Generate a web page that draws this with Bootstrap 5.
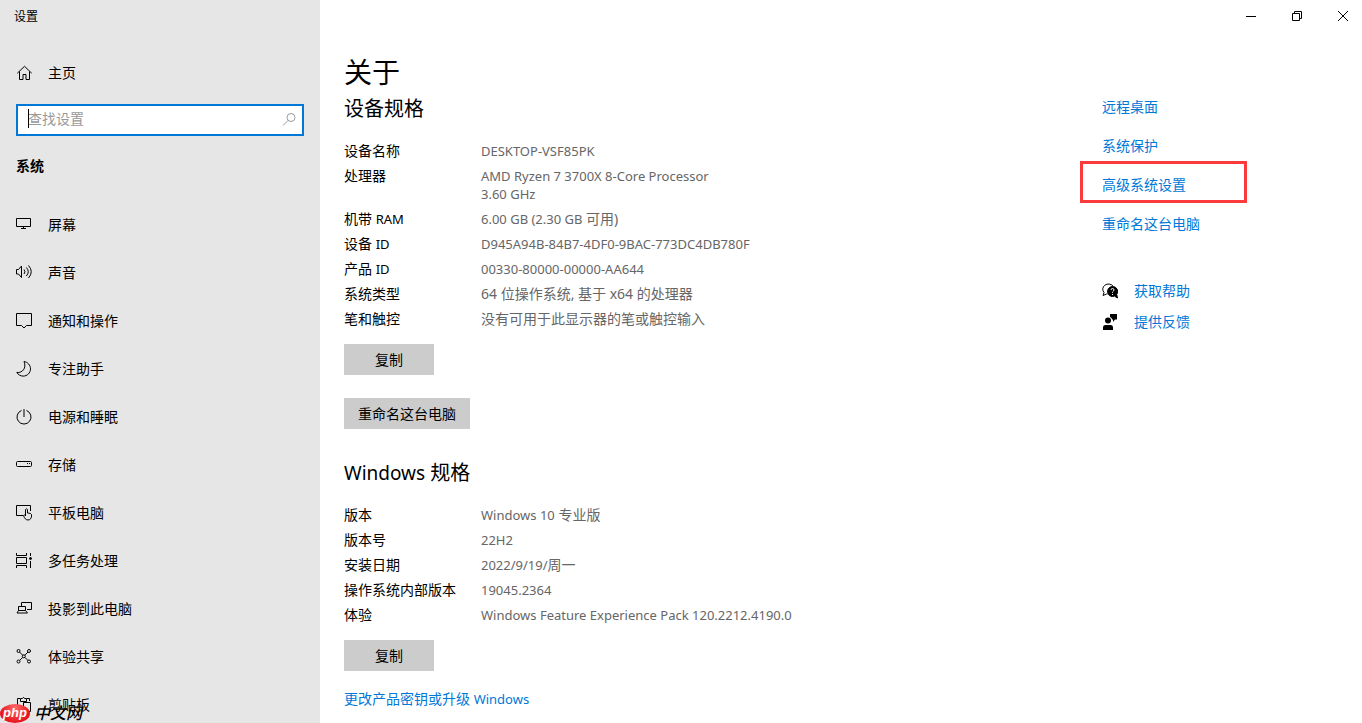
<!DOCTYPE html>
<html lang="zh-CN">
<head>
<meta charset="utf-8">
<meta name="viewport" content="width=device-width, initial-scale=1">
<title>设置</title>
<link href="https://cdn.jsdelivr.net/npm/bootstrap@5.3.0/dist/css/bootstrap.min.css" rel="stylesheet">
<style>
  body { font-family: "Noto Sans", "Noto Sans CJK SC", sans-serif; font-size: 14px; line-height: 18px; color: #000; background: #fff; }
  a { color: #0078d7; text-decoration: none; }
  svg { display: block; fill: none; stroke: #000; }
  .side-pane { width: 320px; background: #e6e6e6; }
  .pane-title { font-size: 12px; line-height: 34px; padding-left: 14px; }
  .side-link { height: 48px; padding: 0 16px; gap: 16px; color: #000; line-height: 20px; }
  .home-link { margin-top: 15px; }
  .search-field { margin: 7px 16px 0; }
  .search-field input { height: 32px; border: 2px solid #0078d7; border-radius: 0; padding: 0 32px 3px 10px; font-size: 14px; line-height: 20px; background: #fff; color: #000; box-shadow: none; }
  .search-field input::placeholder { color: #999; }
  .caret-line { left: 12px; top: 5px; width: 1px; height: 19px; background: #000; }
  .search-icon { right: 7px; top: 8px; }
  .search-icon svg { stroke: #999; }
  .group-title { font-size: 14px; line-height: 20px; font-weight: 700; margin: 20px 16px 25px; }
  .window-bar { height: 32px; margin-right: -4px; }
  .window-bar button { width: 46px; border: 0; background: none; padding: 0; }
  .about-area { padding: 22px 0 0 24px; }
  .page-title { font-size: 28px; line-height: 36px; font-weight: 400; margin: 0 0 5px; }
  .section-title { font-size: 20px; line-height: 28px; font-weight: 400; margin: 0 0 15px; }
  .section-title .latin { font-size: 19px; }
  .spec-table { margin-bottom: 13px; }
  .spec-table th { width: 137px; font-weight: 400; padding: 4px 0 3px; vertical-align: top; }
  .spec-table td { color: #666; padding: 4px 0 3px; }
  .latin { font-size: 13px; }
  .flat-btn { background: #ccc; border-radius: 0; border: 0; color: #000; font-size: 14px; line-height: 19px; padding: 6px 14px; min-width: 90px; }
  .rename-btn { margin: 23px 0 30px; }
  .upgrade-link { margin: 19px 0 0; }
  .related { width: 260px; padding-top: 55px; }
  .related li { line-height: 39px; }
  .marked::after { content: ""; position: absolute; left: -22px; top: -4px; width: 167px; height: 42px; border: 3px solid #fb3a3b; pointer-events: none; }
  .help-links { margin-top: 32px; }
  .help-links a { gap: 16px; line-height: 31px; }
  .site-tag { left: 0; bottom: 0; }
  .site-tag .oval { width: 30px; height: 19px; border-radius: 50%; background: radial-gradient(ellipse at 50% 20%, #ff6a6a, #e8141c 70%); color: #fff; font: italic 700 13px/17px "Liberation Sans", sans-serif; text-align: center; }
  .site-tag .word { font-size: 16px; line-height: 20px; font-style: italic; font-weight: 500; }
</style>
</head>
<body>
<div class="d-flex vh-100 overflow-hidden">
  <aside class="side-pane flex-shrink-0 overflow-hidden position-relative">
    <div class="pane-title">设置</div>
    <a class="side-link home-link d-flex align-items-center" href="#">
      <svg width="16" height="16" viewBox="0 0 16 16"><path d="M1.300 8.200 8.500 1.300l7.200 6.900M3.500 6.500v8h3.500v-5h3v5h3.500v-8"/></svg>
      主页
    </a>
    <div class="search-field position-relative">
      <input class="form-control" type="text" id="find" placeholder="查找设置" aria-label="查找设置">
      <span class="caret-line position-absolute"></span>
      <span class="search-icon position-absolute"><svg width="16" height="16" viewBox="0 0 16 16"><circle cx="10" cy="5.500" r="4"/><path d="m7 8.500-5 5"/></svg></span>
    </div>
    <h2 class="group-title">系统</h2>
    <nav>
      <a class="side-link d-flex align-items-center" href="#"><svg width="16" height="16" viewBox="0 0 16 16"><path d="M.5 1.500h14v8H.5zM7.500 9.500v2M5 11.500h5"/></svg>屏幕</a>
      <a class="side-link d-flex align-items-center" href="#"><svg width="16" height="16" viewBox="0 0 16 16"><path d="M.5 4.500h2l3-3.500v11.500l-3-3.500h-2zM8 4.500q2 2.300 0 4.500M10.300 2.500q4 4.200 0 8.500M12.500.5q5.500 6.200 0 12.500"/></svg>声音</a>
      <a class="side-link d-flex align-items-center" href="#"><svg width="16" height="16" viewBox="0 0 16 16"><path d="M.5.5h15v12h-5L8 15l-2.500-2.500h-5z"/></svg>通知和操作</a>
      <a class="side-link d-flex align-items-center" href="#"><svg width="16" height="16" viewBox="0 0 16 16"><path d="M8 .5c3.800.6 6.500 3.700 6.500 7.400 0 4-3.300 7.200-7.300 7.200-2.600 0-5-1.300-6.400-3.700C6 12.500 11 7 8 .5z"/></svg>专注助手</a>
      <a class="side-link d-flex align-items-center" href="#"><svg width="16" height="16" viewBox="0 0 16 16"><path d="M5.500 1.500a7 7 0 1 0 5 0M8 0v8"/></svg>电源和睡眠</a>
      <a class="side-link d-flex align-items-center" href="#"><svg width="16" height="16" viewBox="0 0 16 16"><rect x=".5" y="4.500" width="15" height="5" rx="1"/><path d="M11 6.500h1M13 6.500h1"/></svg>存储</a>
      <a class="side-link d-flex align-items-center" href="#"><svg width="16" height="16" viewBox="0 0 16 16"><path d="M7 10.500H.5V.5h14V6M9.500 11V4.500q1-1.500 2 0V8q3.500 0 4 1.500c.5 3.500-1.200 5.500-3.500 5.500-2 0-3.500-1.500-4.500-4.500q1-1 2 0"/></svg>平板电脑</a>
      <a class="side-link d-flex align-items-center" href="#"><svg width="16" height="16" viewBox="0 0 16 16"><path d="M.5 0v2.500h10V0M.5 4.500h10v6H.5zM.5 15v-2.500h10V15M14.500 0v3M14.500 8v7"/><circle cx="14.500" cy="5.500" r="1" fill="#000"/></svg>多任务处理</a>
      <a class="side-link d-flex align-items-center" href="#"><svg width="16" height="16" viewBox="0 0 16 16"><path d="M5.500 5V1.500h10v7H11M2.500 5.500h7v4h-7zM2.500 9.500l-1.500 2.500h10.500l-2-2.500"/></svg>投影到此电脑</a>
      <a class="side-link d-flex align-items-center" href="#"><svg width="16" height="16" viewBox="0 0 16 16"><circle cx="2.500" cy="2" r="1.500"/><circle cx="13" cy="2" r="1.500"/><circle cx="2.500" cy="12.500" r="1.500"/><circle cx="13" cy="12.500" r="1.500"/><circle cx="7.800" cy="7.300" r="1.500"/><path d="m3.500 3 3.300 3.300M12 3 8.800 6.300M3.500 11.500l3.300-3.200M12 11.500 8.800 8.300"/></svg>体验共享</a>
      <a class="side-link d-flex align-items-center" href="#"><svg width="16" height="16" viewBox="0 0 16 16"><path d="M4 1.500H1.500v12H6M11 1.500h2.500V4M4.500 4.500v-3h2q1-2.500 2 0h2v3zM7.500 5.500h7v9h-7z"/></svg>剪贴板</a>
    </nav>
    <div class="site-tag position-absolute d-flex align-items-center">
      <span class="oval">php</span><span class="word ms-1">中文网</span>
    </div>
  </aside>

  <main class="flex-grow-1 overflow-hidden">
    <div class="window-bar d-flex justify-content-end">
      <button type="button" aria-label="最小化"><svg class="mx-auto" width="10" height="10" viewBox="0 0 10 10"><path d="M0 5.500h10"/></svg></button>
      <button type="button" aria-label="还原"><svg class="mx-auto" width="10" height="10" viewBox="0 0 10 10"><path d="M.5 2.500h7v7h-7zM2.500 2.500v-2h7v7h-2"/></svg></button>
      <button type="button" aria-label="关闭"><svg class="mx-auto" width="10" height="10" viewBox="0 0 10 10"><path d="m0 0 10 10M10 0 0 10"/></svg></button>
    </div>
    <div class="d-flex">
      <section class="about-area flex-grow-1">
        <h1 class="page-title">关于</h1>
        <h2 class="section-title">设备规格</h2>
        <table class="spec-table">
          <tr><th scope="row">设备名称</th><td class="latin">DESKTOP-VSF85PK</td></tr>
          <tr><th scope="row">处理器</th><td class="latin">AMD Ryzen 7 3700X 8-Core Processor<br>3.60 GHz</td></tr>
          <tr><th scope="row">机带 <span class="latin">RAM</span></th><td><span class="latin">6.00 GB (2.30 GB</span> 可用)</td></tr>
          <tr><th scope="row">设备 <span class="latin">ID</span></th><td class="latin">D945A94B-84B7-4DF0-9BAC-773DC4DB780F</td></tr>
          <tr><th scope="row">产品 <span class="latin">ID</span></th><td class="latin">00330-80000-00000-AA644</td></tr>
          <tr><th scope="row">系统类型</th><td>64 位操作系统, 基于 x64 的处理器</td></tr>
          <tr><th scope="row">笔和触控</th><td>没有可用于此显示器的笔或触控输入</td></tr>
        </table>
        <button type="button" class="btn flat-btn d-block">复制</button>
        <button type="button" class="btn flat-btn rename-btn d-block">重命名这台电脑</button>
        <h2 class="section-title"><span class="latin">Windows</span> 规格</h2>
        <table class="spec-table">
          <tr><th scope="row">版本</th><td><span class="latin">Windows 10</span> 专业版</td></tr>
          <tr><th scope="row">版本号</th><td class="latin">22H2</td></tr>
          <tr><th scope="row">安装日期</th><td><span class="latin">2022/9/19/</span>周一</td></tr>
          <tr><th scope="row">操作系统内部版本</th><td class="latin">19045.2364</td></tr>
          <tr><th scope="row">体验</th><td class="latin">Windows Feature Experience Pack 120.2212.4190.0</td></tr>
        </table>
        <button type="button" class="btn flat-btn d-block">复制</button>
        <p class="upgrade-link"><a href="#">更改产品密钥或升级 <span class="latin">Windows</span></a></p>
      </section>
      <aside class="related flex-shrink-0">
        <ul class="list-unstyled mb-0">
          <li><a href="#">远程桌面</a></li>
          <li><a href="#">系统保护</a></li>
          <li class="marked position-relative"><a href="#">高级系统设置</a></li>
          <li><a href="#">重命名这台电脑</a></li>
        </ul>
        <div class="help-links">
          <a class="d-flex align-items-center" href="#"><svg width="16" height="16" viewBox="0 0 16 16"><path d="M11 3A5.500 5 0 1 0 2 9.500L1 12.500l3.500-1.500h1"/><path d="M10.500 3.500a5 5 0 1 0 2 9.600l3 1.900-.8-3.500a5 5 0 0 0-4.200-8z" fill="#000"/><path d="M9 7q0-1.500 1.500-1.500T12 7q0 .8-1.500 2v.7M10.500 11v1" stroke="#fff"/></svg>获取帮助</a>
          <a class="d-flex align-items-center" href="#"><svg width="16" height="16" viewBox="0 0 16 16"><g fill="#000" stroke="none"><circle cx="6" cy="6.500" r="3"/><path d="M1 16v-2.500Q1 11 3.500 11h5q2.500 0 2.500 2.500V16zM8 0h7v5.500h-2L11 8V5.500h-1Q10 3.500 8 3z"/></g></svg>提供反馈</a>
        </div>
      </aside>
    </div>
  </main>
</div>
<script src="https://cdn.jsdelivr.net/npm/bootstrap@5.3.0/dist/js/bootstrap.bundle.min.js"></script>
</body>
</html>
